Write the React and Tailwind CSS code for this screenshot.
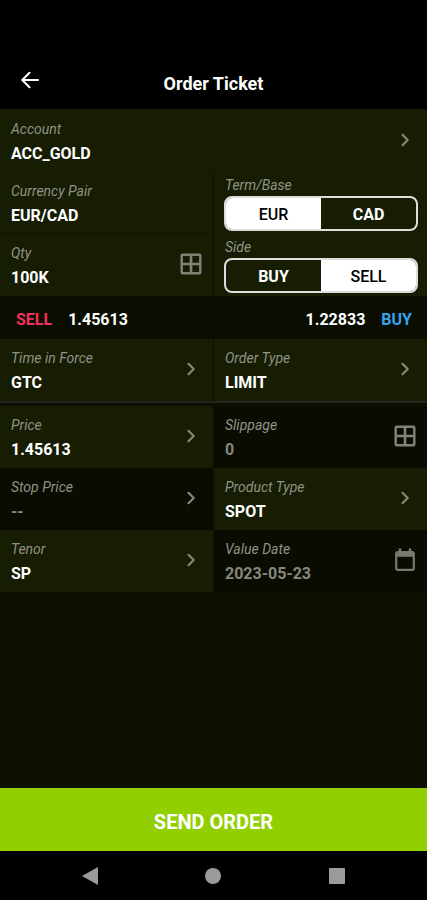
import { useState } from "react";

function GridIcon() {
  return (
    <svg
      viewBox="0 0 24 24"
      className="mb-1 size-6 shrink-0 text-[#808376]"
      fill="none"
      stroke="currentColor"
      aria-hidden="true"
    >
      <rect x="2.7" y="2.7" width="18.6" height="18.6" rx="1" strokeWidth="2.4" />
      <path d="M12 3v18M3 12h18" strokeWidth="2.6" />
    </svg>
  );
}

function CalendarIcon() {
  return (
    <svg
      viewBox="0 0 24 24"
      className="mb-1 size-6 shrink-0 text-[#77796f]"
      fill="none"
      stroke="currentColor"
      aria-hidden="true"
    >
      <rect x="3.2" y="4.2" width="17.6" height="17.6" rx="1.5" strokeWidth="2.2" />
      <path d="M3.2 6.6h17.6" strokeWidth="4.4" />
      <path d="M7 1.5v4M17 1.5v4" strokeWidth="2.6" strokeLinecap="round" />
    </svg>
  );
}

function Chevron() {
  return (
    <svg
      viewBox="0 0 24 24"
      className="mb-1 size-6 shrink-0 text-[#85887c]"
      fill="none"
      stroke="currentColor"
      strokeWidth="2.2"
      strokeLinecap="round"
      strokeLinejoin="round"
      aria-hidden="true"
    >
      <path d="m9.5 6.8 5.2 5.2-5.2 5.2" />
    </svg>
  );
}

function PickerField({ label, value, muted, dark, className = "pt-[7px]" }) {
  return (
    <button
      type="button"
      className={`flex w-full items-center justify-between pr-[10px] pb-[5px] pl-[11px] text-left ${
        dark ? "bg-[#0a0c01]" : "bg-[#161d02]"
      } ${className}`}
    >
      <span className="min-w-0">
        <span className="block text-sm/6 italic text-[#8f9287]">{label}</span>
        <span
          className={`block text-base/[26px] font-bold ${
            muted ? "text-[#85887c]" : "text-white"
          }`}
        >
          {value}
        </span>
      </span>
      <Chevron />
    </button>
  );
}

function StaticField({ label, value }) {
  return (
    <div className="border-b border-[#10150a] bg-[#161d02] px-[11px] pt-[7px] pb-1">
      <p className="text-sm/6 italic text-[#8f9287]">{label}</p>
      <p className="text-base/[26px] font-bold text-white">{value}</p>
    </div>
  );
}

function InputField({ id, label, defaultValue, disabled, icon }) {
  return (
    <div
      className={`flex items-center justify-between pt-[7px] pr-[10px] pb-[5px] pl-[11px] ${
        disabled ? "bg-[#0a0c01]" : "bg-[#161d02]"
      }`}
    >
      <div className="min-w-0 flex-1">
        <label htmlFor={id} className="block text-sm/6 italic text-[#8f9287]">
          {label}
        </label>
        <input
          id={id}
          type="text"
          defaultValue={defaultValue}
          disabled={disabled}
          className="block h-[26px] w-full bg-transparent text-base/[26px] font-bold text-white outline-none disabled:text-[#85887c]"
        />
      </div>
      {icon}
    </div>
  );
}

function Toggle({ label, options, value, onChange }) {
  return (
    <div
      role="group"
      aria-label={label}
      className="bg-[#161d02] pt-[2px] pr-[9px] pb-[3px] pl-[10px]"
    >
      <span className="block pl-px text-sm/[22px] italic text-[#8f9287]">
        {label}
      </span>
      <div className="flex h-[35px] overflow-hidden rounded-lg border-2 border-[#dcdedb]">
        {options.map((option) => (
          <button
            key={option}
            type="button"
            aria-pressed={value === option}
            onClick={() => onChange(option)}
            className={`flex-1 pt-0.5 text-base ${
              value === option
                ? "bg-white font-medium text-black"
                : "font-bold text-white"
            }`}
          >
            {option}
          </button>
        ))}
      </div>
    </div>
  );
}

export default function App() {
  const [base, setBase] = useState("EUR");
  const [side, setSide] = useState("SELL");

  return (
    <div className="flex min-h-screen w-full flex-col bg-[#0c1000] font-['Roboto',sans-serif]">
      <header className="grid h-[109px] grid-cols-[60px_1fr_60px] items-center bg-black pt-[54px] text-white">
        <button
          type="button"
          aria-label="Back"
          className="flex size-[60px] items-center justify-center pb-2"
        >
          <svg
            viewBox="0 0 24 24"
            className="size-6"
            fill="none"
            stroke="currentColor"
            strokeWidth="2.1"
            strokeLinecap="round"
            strokeLinejoin="round"
          >
            <path d="M20 12H4.5M11.5 4.8 4.3 12l7.2 7.2" />
          </svg>
        </button>
        <h1 className="text-center text-lg font-bold">Order Ticket</h1>
      </header>

      <main className="flex-1">
        <PickerField label="Account" value="ACC_GOLD" className="pt-2" />

        <div className="grid grid-cols-2 gap-x-px">
          <StaticField label="Currency Pair" value="EUR/CAD" />
          <Toggle
            label="Term/Base"
            options={["EUR", "CAD"]}
            value={base}
            onChange={setBase}
          />
          <InputField id="qty" label="Qty" defaultValue="100K" icon={<GridIcon />} />
          <Toggle
            label="Side"
            options={["BUY", "SELL"]}
            value={side}
            onChange={setSide}
          />
        </div>

        <div className="flex h-[43px] items-center justify-between bg-[#0a0d01] pr-[15px] pl-4 text-base font-bold text-white">
          <p className="flex gap-4 pt-1">
            <span className="text-[#f0325a]">SELL</span>
            <span>1.45613</span>
          </p>
          <p className="flex gap-4 pt-1">
            <span>1.22833</span>
            <span className="text-[#32a5ec]">BUY</span>
          </p>
        </div>

        <div className="grid grid-cols-2 gap-x-px border-b-2 border-[#22251f]">
          <PickerField label="Time in Force" value="GTC" />
          <PickerField label="Order Type" value="LIMIT" />
        </div>

        <div className="mt-[3px] grid grid-cols-2 gap-x-px">
          <PickerField label="Price" value="1.45613" />
          <InputField
            id="slippage"
            label="Slippage"
            defaultValue="0"
            disabled
            icon={<GridIcon />}
          />
          <PickerField label="Stop Price" value="--" muted dark />
          <PickerField label="Product Type" value="SPOT" />
          <PickerField label="Tenor" value="SP" />
          <InputField
            id="value-date"
            label="Value Date"
            defaultValue="2023-05-23"
            disabled
            icon={<CalendarIcon />}
          />
        </div>
      </main>

      <button
        type="button"
        className="h-[63px] w-full bg-[#91cf00] pt-1 text-xl font-bold text-white"
      >
        SEND ORDER
      </button>

      <nav
        aria-label="System"
        className="flex h-[49px] items-center justify-around bg-black px-7 text-[#9b9b9b]"
      >
        <button type="button" aria-label="Back">
          <svg viewBox="0 0 16 18" className="h-[18px] w-4" fill="currentColor">
            <path d="M16 0v18L0 9z" />
          </svg>
        </button>
        <button
          type="button"
          aria-label="Home"
          className="size-4 rounded-full bg-[#9b9b9b]"
        />
        <button
          type="button"
          aria-label="Recent apps"
          className="size-4 rounded-[1px] bg-[#9b9b9b]"
        />
      </nav>
    </div>
  );
}
